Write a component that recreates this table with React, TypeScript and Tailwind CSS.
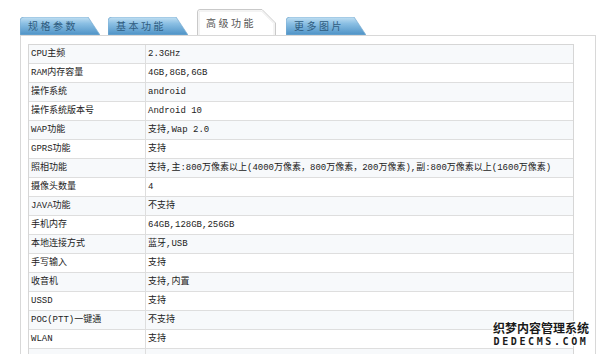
const rows: [string, string][] = [
  ["CPU主频", "2.3GHz"],
  ["RAM内存容量", "4GB,8GB,6GB"],
  ["操作系统", "android"],
  ["操作系统版本号", "Android 10"],
  ["WAP功能", "支持,Wap 2.0"],
  ["GPRS功能", "支持"],
  [
    "照相功能",
    "支持,主:800万像素以上(4000万像素，800万像素，200万像素),副:800万像素以上(1600万像素)",
  ],
  ["摄像头数量", "4"],
  ["JAVA功能", "不支持"],
  ["手机内存", "64GB,128GB,256GB"],
  ["本地连接方式", "蓝牙,USB"],
  ["手写输入", "支持"],
  ["收音机", "支持,内置"],
  ["USSD", "支持"],
  ["POC(PTT)一键通", "不支持"],
  ["WLAN", "支持"],
  ["", ""],
];

// Blue folder-style tab: rounded top-left, slanted right edge.
function BlueTab({ label, id }: { label: string; id: string }) {
  return (
    <div className="relative flex h-[18px] w-[80px] items-center">
      <svg className="absolute inset-0" width="80" height="18" viewBox="0 0 80 18">
        <defs>
          <linearGradient id={id} x1="0" y1="0" x2="0" y2="1">
            <stop offset="0" stopColor="#c4e1f3" />
            <stop offset="0.35" stopColor="#8cc0e4" />
            <stop offset="1" stopColor="#4d92c6" />
          </linearGradient>
        </defs>
        <path d="M0 18 L0 4 Q0 0 4 0 L68 0 L80 18 Z" fill={`url(#${id})`} stroke="#7fb0d4" strokeWidth="0.8" />
      </svg>
      <span className="relative pl-[8px] text-[10px] leading-none tracking-[2.5px] text-[#2f5c80]">{label}</span>
    </div>
  );
}

function ActiveTab({ label }: { label: string }) {
  return (
    <div className="relative flex h-[26px] w-[79px] items-start">
      <svg className="absolute inset-0" width="79" height="26" viewBox="0 0 79 26">
        <path d="M0.5 26 L0.5 3 Q0.5 0.5 3 0.5 L65 0.5 L78.5 14 L78.5 26" fill="#fff" stroke="#c9c9c9" strokeWidth="1" />
        <path d="M2 26 L2 3.5 Q2 2 3.5 2 L64.5 2 L77 14.5 L77 26" fill="none" stroke="#e8e8e8" strokeWidth="1" />
      </svg>
      <span className="relative pl-[9px] pt-[9px] text-[10px] leading-none tracking-[2.5px] text-[#555]">{label}</span>
    </div>
  );
}

export default function App() {
  return (
    <div
      className="relative h-[354px] w-[600px] overflow-hidden bg-white"
      style={{ fontFamily: '"Noto Sans CJK SC", sans-serif' }}
    >
      {/* tab strip */}
      <div className="flex h-[35px] items-end pl-[20px]">
        <BlueTab label="规格参数" id="g1" />
        <div className="ml-[8px]">
          <BlueTab label="基本功能" id="g2" />
        </div>
        <div className="ml-[9px]">
          <ActiveTab label="高级功能" />
        </div>
        <div className="ml-[10px]">
          <BlueTab label="更多图片" id="g4" />
        </div>
      </div>

      {/* panel */}
      <div className="ml-[20px] h-[330px] w-[576px] border-l border-r border-t border-[#d8d8d8] pl-[7px] pt-[8px]">
        <div
          className="w-[546px] border-l border-r border-t border-[#d6d6d6] text-[9px] text-[#222]"
          style={{ fontFamily: '"Liberation Mono", "Noto Sans CJK SC", monospace' }}
        >
          {rows.map(([k, v], i) => (
            <div
              key={i}
              className={`grid h-[19px] grid-cols-[117px_1fr] border-b border-[#dedede] ${i % 2 === 0 ? "bg-[#f7f9fb]" : "bg-white"}`}
            >
              <div className="flex items-center border-r border-[#dedede] pl-[2px] leading-none">{k}</div>
              <div className="flex items-center whitespace-nowrap pl-[2px] leading-none">{v}</div>
            </div>
          ))}
        </div>
      </div>

      {/* watermark */}
      <div className="absolute right-[11px] bottom-[7px] flex flex-col items-center leading-none">
        <span className="text-[12px] font-bold text-[#1a1a1a] [text-shadow:1px_0_0_#fff,-1px_0_0_#fff,0_1px_0_#fff,0_-1px_0_#fff,1px_1px_0_#fff,-1px_-1px_0_#fff,1px_-1px_0_#fff,-1px_1px_0_#fff]">
          织梦内容管理系统
        </span>
        <span
          className="mt-[3px] text-[10px] font-bold tracking-[2.6px] text-[#1a1a1a] [text-shadow:1px_0_0_#fff,-1px_0_0_#fff,0_1px_0_#fff,0_-1px_0_#fff]"
          style={{ fontFamily: '"DejaVu Sans Mono", monospace' }}
        >
          DEDECMS.COM
        </span>
      </div>
    </div>
  );
}
